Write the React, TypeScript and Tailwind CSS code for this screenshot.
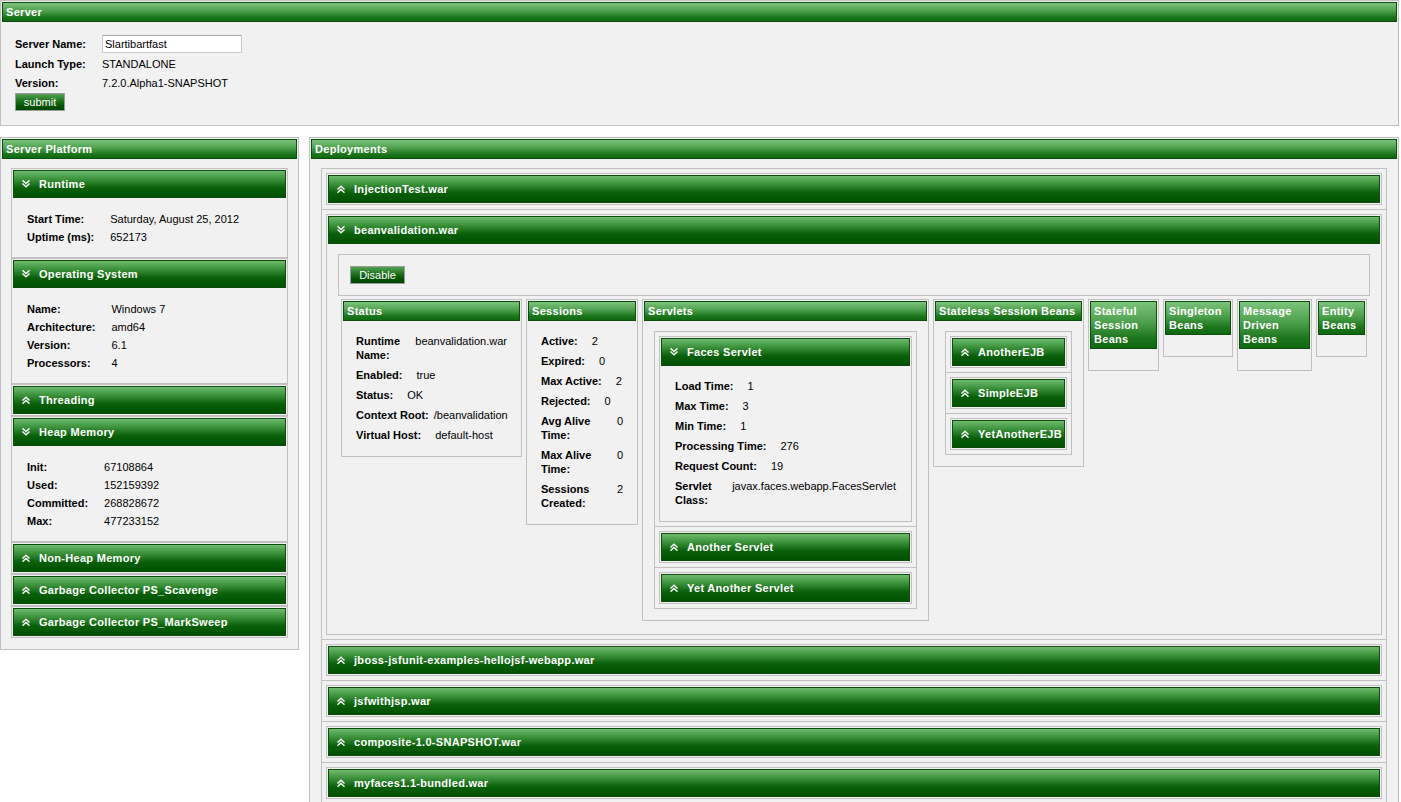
import type { ReactNode } from 'react';

const HEAD_BG = 'bg-[linear-gradient(to_bottom,#7cc47c_0%,#4c9f4c_45%,#1a741a_80%,#0f6a0f_100%)]';
const ACC_BG = 'bg-[linear-gradient(to_bottom,#6fba6f_0%,#3d943d_30%,#0a600a_65%,#005000_100%)]';
const BTN_BG = 'bg-[linear-gradient(to_bottom,#52a252_0%,#1c6e1c_45%,#035303_75%,#004800_100%)]';

function Chevron({ up }: { up: boolean }) {
  return (
    <svg width="8" height="8" viewBox="0 0 8 8" className="shrink-0">
      <g fill="none" stroke="#fff" strokeWidth="1.4" strokeLinecap="square">
        {up ? (
          <>
            <polyline points="1,4 4,1.2 7,4" />
            <polyline points="1,7.2 4,4.4 7,7.2" />
          </>
        ) : (
          <>
            <polyline points="1,0.8 4,3.6 7,0.8" />
            <polyline points="1,4 4,6.8 7,4" />
          </>
        )}
      </g>
    </svg>
  );
}

function AccHeader({ title, open }: { title: string; open?: boolean }) {
  return (
    <div className={`flex h-[28px] items-center gap-[9px] border border-[#0e4c0e] pl-[8px] font-bold tracking-[0.3px] text-white ${ACC_BG}`}>
      <Chevron up={!open} />
      <span>{title}</span>
    </div>
  );
}

// item inside a bordered list, with separators between items
function ListItem({ title, open, last, children }: { title: string; open?: boolean; last?: boolean; children?: ReactNode }) {
  return (
    <div className={`p-1 ${last ? '' : 'border-b border-[#c0c0c0]'}`}>
      <div className="border border-[#c0c0c0] p-px">
        <AccHeader title={title} open={open} />
        {children}
      </div>
    </div>
  );
}

// left side accordion item
function SideItem({ title, open, rows }: { title: string; open?: boolean; rows?: [string, string][] }) {
  return (
    <div className="border border-[#c0c0c0] p-px">
      <AccHeader title={title} open={open} />
      {rows && (
        <div className="grid grid-cols-[auto_1fr] gap-x-[16px] pb-[10px] pl-[14px] pt-[12px]">
          {rows.map(([k, v]) => (
            <div key={k} className="contents">
              <div className="flex h-[18px] items-center whitespace-nowrap font-bold">{k}</div>
              <div className="flex h-[18px] items-center whitespace-nowrap">{v}</div>
            </div>
          ))}
        </div>
      )}
    </div>
  );
}

function Panel({ title, w, children }: { title: string; w: string; children?: ReactNode }) {
  return (
    <div className={`shrink-0 border border-[#c0c0c0] p-px ${w}`}>
      <div className={`border border-[#0e4c0e] px-[3px] py-[2px] font-bold tracking-[0.3px] text-white ${HEAD_BG}`}>{title}</div>
      <div className="p-[10px]">{children}</div>
    </div>
  );
}

function Row({ label, value, wrap, tight }: { label: ReactNode; value: string; wrap?: boolean; tight?: boolean }) {
  return (
    <div className={`flex items-start ${tight ? '' : 'gap-[8px]'}`}>
      <div className={`whitespace-nowrap py-[3px] font-bold ${tight ? 'pl-[3px]' : 'px-[3px]'} ${wrap ? 'flex-1' : ''}`}>{label}</div>
      <div className={`shrink-0 whitespace-nowrap py-[3px] ${tight ? 'pl-[5px]' : 'px-[3px]'}`}>{value}</div>
    </div>
  );
}

function GreenButton({ label, w }: { label: string; w: string }) {
  return (
    <button className={`h-[18px] border border-[#9c9c9c] text-[11px] leading-[14px] text-white ${w} ${BTN_BG}`}>{label}</button>
  );
}

function HeadPanel({ title, children, className }: { title: string; children: ReactNode; className?: string }) {
  return (
    <div className={`border border-[#c0c0c0] bg-[#f1f1f1] p-px ${className ?? ''}`}>
      <div className={`h-[20px] border border-[#0e4c0e] pl-[3px] font-bold leading-[18px] tracking-[0.3px] text-white ${HEAD_BG}`}>{title}</div>
      {children}
    </div>
  );
}

export default function App() {
  return (
    <div className="h-[802px] w-[1401px] overflow-hidden bg-white font-['Liberation_Sans',Arial,sans-serif] text-[11px] leading-[14px] text-black">
      {/* Server */}
      <HeadPanel title="Server" className="w-[1399px]">
        <div className="pb-[13px] pl-[13px] pt-[12px]">
          <div className="grid grid-cols-[87px_1fr]">
            <div className="flex h-[20px] items-center font-bold">Server Name:</div>
            <div className="flex h-[20px] items-center">
              <input
                readOnly
                value="Slartibartfast"
                className="h-[18px] w-[140px] border border-[#c8c8c8] border-t-[#a9a9a9] bg-white pl-[2px] text-[11px] outline-none"
              />
            </div>
            <div className="flex h-[19px] items-center font-bold">Launch Type:</div>
            <div className="flex h-[19px] items-center">STANDALONE</div>
            <div className="flex h-[19px] items-center font-bold">Version:</div>
            <div className="flex h-[19px] items-center">7.2.0.Alpha1-SNAPSHOT</div>
          </div>
          <div className="mt-px">
            <GreenButton label="submit" w="w-[50px]" />
          </div>
        </div>
      </HeadPanel>

      <div className="mt-[11px] flex items-start gap-[10px]">
        {/* Server Platform */}
        <HeadPanel title="Server Platform" className="w-[299px] shrink-0">
          <div className="px-[9px] pb-[10px] pt-[9px]">
            <SideItem
              title="Runtime"
              open
              rows={[
                ['Start Time:', 'Saturday, August 25, 2012'],
                ['Uptime (ms):', '652173'],
              ]}
            />
            <SideItem
              title="Operating System"
              open
              rows={[
                ['Name:', 'Windows 7'],
                ['Architecture:', 'amd64'],
                ['Version:', '6.1'],
                ['Processors:', '4'],
              ]}
            />
            <SideItem title="Threading" />
            <SideItem
              title="Heap Memory"
              open
              rows={[
                ['Init:', '67108864'],
                ['Used:', '152159392'],
                ['Committed:', '268828672'],
                ['Max:', '477233152'],
              ]}
            />
            <SideItem title="Non-Heap Memory" />
            <SideItem title="Garbage Collector PS_Scavenge" />
            <SideItem title="Garbage Collector PS_MarkSweep" />
          </div>
        </HeadPanel>

        {/* Deployments */}
        <HeadPanel title="Deployments" className="w-[1090px] shrink-0">
          <div className="px-[10px] pt-[9px]">
            <div className="border border-[#c0c0c0]">
              <ListItem title="InjectionTest.war" />
              <ListItem title="beanvalidation.war" open>
                <div className="pb-[12px] pl-[10px] pr-[10px] pt-[10px]">
                  <div className="border border-[#c0c0c0] p-[11px]">
                    <GreenButton label="Disable" w="w-[55px]" />
                  </div>
                  <div className="ml-[3px] mt-[3px] flex items-start gap-[4px]">
                    <Panel title="Status" w="w-[181px]">
                      <Row label={<>Runtime<br />Name:</>} value="beanvalidation.war" wrap />
                      <Row label="Enabled:" value="true" />
                      <Row label="Status:" value="OK" />
                      <Row label="Context Root:" value="/beanvalidation" tight />
                      <Row label="Virtual Host:" value="default-host" />
                    </Panel>
                    <Panel title="Sessions" w="w-[112px]">
                      <Row label="Active:" value="2" />
                      <Row label="Expired:" value="0" />
                      <Row label="Max Active:" value="2" />
                      <Row label="Rejected:" value="0" />
                      <Row label={<>Avg Alive<br />Time:</>} value="0" wrap />
                      <Row label={<>Max Alive<br />Time:</>} value="0" wrap />
                      <Row label={<>Sessions<br />Created:</>} value="2" wrap />
                    </Panel>
                    <Panel title="Servlets" w="w-[287px]">
                      <div className="border border-[#c0c0c0]">
                        <ListItem title="Faces Servlet" open>
                          <div className="px-[11px] py-[10px]">
                            <Row label="Load Time:" value="1" />
                            <Row label="Max Time:" value="3" />
                            <Row label="Min Time:" value="1" />
                            <Row label="Processing Time:" value="276" />
                            <Row label="Request Count:" value="19" />
                            <Row label={<>Servlet<br />Class:</>} value="javax.faces.webapp.FacesServlet" wrap />
                          </div>
                        </ListItem>
                        <ListItem title="Another Servlet" />
                        <ListItem title="Yet Another Servlet" last />
                      </div>
                    </Panel>
                    <Panel title="Stateless Session Beans" w="w-[151px]">
                      <div className="border border-[#c0c0c0]">
                        <ListItem title="AnotherEJB" />
                        <ListItem title="SimpleEJB" />
                        <ListItem title="YetAnotherEJB" last />
                      </div>
                    </Panel>
                    <Panel title="Stateful Session Beans" w="w-[71px]" />
                    <Panel title="Singleton Beans" w="w-[70px]" />
                    <Panel title="Message Driven Beans" w="w-[75px]" />
                    <Panel title="Entity Beans" w="w-[51px]" />
                  </div>
                </div>
              </ListItem>
              <ListItem title="jboss-jsfunit-examples-hellojsf-webapp.war" />
              <ListItem title="jsfwithjsp.war" />
              <ListItem title="composite-1.0-SNAPSHOT.war" />
              <ListItem title="myfaces1.1-bundled.war" />
            </div>
          </div>
        </HeadPanel>
      </div>
    </div>
  );
}
